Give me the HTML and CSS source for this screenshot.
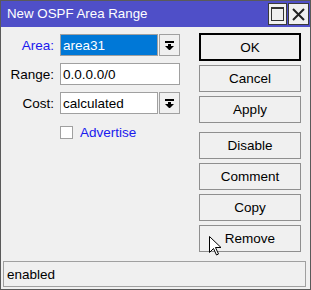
FILE: index.html
```html
<!DOCTYPE html>
<html lang="en">

<head>
    <meta charset="UTF-8">
    <title>New OSPF Area Range</title>
    <link rel="stylesheet" href="styles.css">
</head>

<body>
    <div class="window">
        <div class="titlebar">
            <span class="title">New OSPF Area Range</span>
            <div class="title-buttons">
                <div class="tbtn max"><span class="max-box"></span></div>
                <div class="tbtn close">
                    <svg width="13" height="13" viewBox="0 0 13 13">
                        <path d="M1 1 L12 12 M12 1 L1 12" stroke="#222" stroke-width="2"/>
                    </svg>
                </div>
            </div>
        </div>

        <div class="content">
            <div class="form">
                <div class="row">
                    <label class="label blue">Area:</label>
                    <div class="field short selected">area31</div>
                    <div class="drop">
                        <svg width="9" height="9" viewBox="0 0 9 9">
                            <rect x="0" y="0" width="9" height="2" fill="#000"/>
                            <rect x="3" y="3" width="3" height="2" fill="#000"/>
                            <polygon points="0,5 9,5 4.5,9.5" fill="#000"/>
                        </svg>
                    </div>
                </div>
                <div class="row">
                    <label class="label">Range:</label>
                    <div class="field long">0.0.0.0/0</div>
                </div>
                <div class="row">
                    <label class="label">Cost:</label>
                    <div class="field short">calculated</div>
                    <div class="drop">
                        <svg width="9" height="9" viewBox="0 0 9 9">
                            <rect x="0" y="0" width="9" height="2" fill="#000"/>
                            <rect x="3" y="3" width="3" height="2" fill="#000"/>
                            <polygon points="0,5 9,5 4.5,9.5" fill="#000"/>
                        </svg>
                    </div>
                </div>
                <div class="check-row">
                    <span class="checkbox"></span>
                    <span class="blue">Advertise</span>
                </div>
            </div>

            <div class="buttons">
                <div class="btn default">OK</div>
                <div class="btn">Cancel</div>
                <div class="btn">Apply</div>
                <div class="btn spaced">Disable</div>
                <div class="btn">Comment</div>
                <div class="btn">Copy</div>
                <div class="btn">Remove</div>
            </div>
        </div>

        <div class="status">enabled</div>

        <svg class="cursor" width="13" height="20" viewBox="0 0 13 20">
            <path d="M0.5 0.5 L0.5 16.5 L4.5 12.5 L7.5 19 L9.5 18 L6.5 11.5 L12 11.5 Z" fill="#fff" stroke="#000" stroke-width="1"/>
        </svg>
    </div>
</body>

</html>
```

FILE: styles.css
```css
* {
    margin: 0;
    padding: 0;
    box-sizing: border-box;
}

body {
    font-family: "Liberation Sans", Arial, sans-serif;
    font-size: 13.5px;
    color: #000;
    background: #f0f0f0;
}

.window {
    position: relative;
    width: 311px;
    height: 290px;
    border: 1px solid #5a5a5a;
    background: #f0f0f0;
    display: flex;
    flex-direction: column;
}

.titlebar {
    height: 26px;
    background: #4f4fc8;
    display: flex;
    align-items: center;
    justify-content: space-between;
    padding-left: 6px;
    padding-right: 1px;
}

.title {
    color: #fff;
    font-size: 13.3px;
    padding-bottom: 1px;
}

.title-buttons {
    display: flex;
    gap: 1px;
    align-self: flex-start;
    margin-top: 2px;
}

.tbtn {
    height: 22px;
    background: #f0f0f0;
    border: 1px solid #3a3a3a;
    display: flex;
    align-items: center;
    justify-content: center;
}

.tbtn.max {
    width: 19px;
}

.tbtn.close {
    width: 21px;
}

.max-box {
    width: 13px;
    height: 14px;
    border: 1px solid #333;
    border-top-width: 2px;
}

.content {
    flex: 1;
    display: flex;
    justify-content: space-between;
    padding: 6px 9px 0 0;
}

.form {
    padding-top: 1px;
}

.row {
    display: flex;
    align-items: center;
    height: 22px;
    margin-bottom: 7px;
}

.label {
    width: 53px;
    text-align: right;
    margin-right: 6px;
}

.blue {
    color: #1a1aee;
}

.field {
    height: 22px;
    border: 1px solid #a0a0a0;
    background: #fff;
    padding-left: 2px;
    display: flex;
    align-items: center;
    white-space: nowrap;
}

.field.short {
    width: 98px;
}

.field.long {
    width: 120px;
}

.field.selected {
    background: #0078d7;
    color: #fff;
}

.drop {
    width: 21px;
    height: 22px;
    margin-left: 1px;
    border: 1px solid #a0a0a0;
    background: #f0f0f0;
    display: flex;
    align-items: center;
    justify-content: center;
}

.check-row {
    display: flex;
    align-items: center;
    padding-left: 59px;
    padding-top: 4px;
}

.checkbox {
    width: 13px;
    height: 13px;
    border: 1px solid #a0a0a0;
    background: #fff;
    margin-right: 7px;
}

.buttons {
    width: 102px;
    display: flex;
    flex-direction: column;
    gap: 4px;
}

.btn {
    height: 27px;
    border: 1px solid #8f8f8f;
    background: #f0f0f0;
    display: flex;
    align-items: center;
    justify-content: center;
}

.btn.default {
    border: 1px solid #000;
    box-shadow: inset 0 0 0 1px #000;
    height: 28px;
}

.btn.spaced {
    margin-top: 5px;
}

.status {
    height: 26px;
    margin: 0 4px 2px 2px;
    border: 1px solid #a0a0a0;
    padding-left: 3px;
    display: flex;
    align-items: center;
}

.cursor {
    position: absolute;
    left: 208px;
    top: 235px;
}
```
